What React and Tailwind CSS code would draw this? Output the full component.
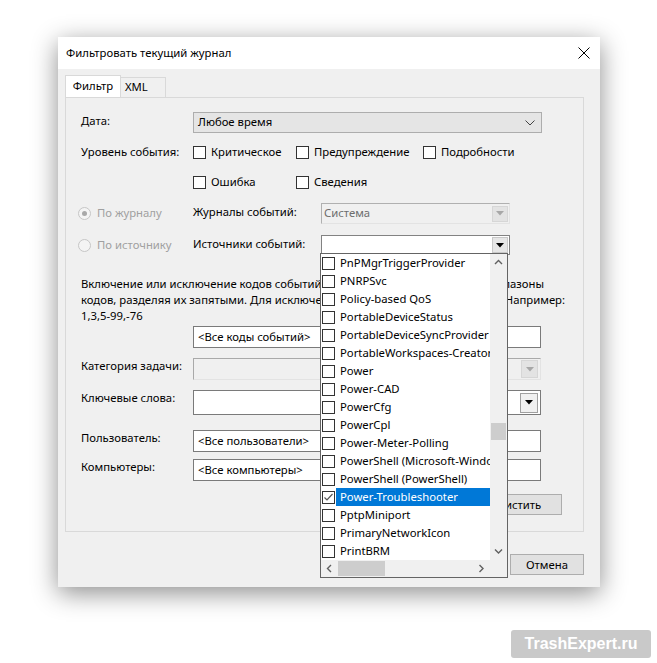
import React from "react";

const items = [
    "PnPMgrTriggerProvider",
    "PNRPSvc",
    "Policy-based QoS",
    "PortableDeviceStatus",
    "PortableDeviceSyncProvider",
    "PortableWorkspaces-Creator",
    "Power",
    "Power-CAD",
    "PowerCfg",
    "PowerCpl",
    "Power-Meter-Polling",
    "PowerShell (Microsoft-Windows-PowerShell)",
    "PowerShell (PowerShell)",
    "Power-Troubleshooter",
    "PptpMiniport",
    "PrimaryNetworkIcon",
    "PrintBRM",
];

function Box({ checked }) {
    return (
        <span className="w-[13px] h-[13px] border border-[#333] bg-white shrink-0 flex items-center justify-center">
            {checked && (
                <svg width="11" height="11" viewBox="0 0 11 11">
                    <polyline points="1.5,5.5 4,8 9.5,2" fill="none" stroke="#555" strokeWidth="1.2" />
                </svg>
            )}
        </span>
    );
}

function Check({ label, className = "" }) {
    return (
        <div className={`flex items-center gap-[5px] h-[20px] ${className}`}>
            <Box />
            <span>{label}</span>
        </div>
    );
}

function Radio({ label, on }) {
    return (
        <div className="flex items-center gap-[6px] w-[115px] -ml-[3px] text-[#a0a0a0] h-[16px]">
            <span className="w-[13px] h-[13px] rounded-full border border-[#c6c6c6] bg-[#f4f4f4] flex items-center justify-center">
                {on && <span className="w-[5px] h-[5px] rounded-full bg-[#a8a8a8]" />}
            </span>
            <span>{label}</span>
        </div>
    );
}

function Tri({ color = "#000" }) {
    return (
        <svg width="8" height="5" viewBox="0 0 8 5">
            <polygon points="0,0 8,0 4,4.5" fill={color} />
        </svg>
    );
}

function Chev({ dir, color = "#606060" }) {
    const pts = {
        up: "1,5 4.5,1.5 8,5",
        down: "1,1.5 4.5,5 8,1.5",
        left: "5,1 1.5,4.5 5,8",
        right: "1.5,1 5,4.5 1.5,8",
    }[dir];
    const vert = dir === "up" || dir === "down";
    return (
        <svg width={vert ? 9 : 7} height={vert ? 7 : 9} viewBox={vert ? "0 0 9 7" : "0 0 7 9"}>
            <polyline points={pts} fill="none" stroke={color} strokeWidth="1.4" />
        </svg>
    );
}

function Label({ children, className = "" }) {
    return <div className={`w-[112px] shrink-0 leading-4 ${className}`}>{children}</div>;
}

function Input({ value, className = "" }) {
    return (
        <div className={`w-[348px] h-[22px] border border-[#7a7a7a] bg-white flex items-center pl-[4px] ${className}`}>
            {value}
        </div>
    );
}

// строка абзаца: середина уходит под раскрытый список, поэтому хвост прижат вправо
function Line({ left, right, width }) {
    return (
        <div className={`flex whitespace-nowrap ${width}`}>
            <span className="flex-1 min-w-0 overflow-hidden">{left}</span>
            <span className="shrink-0">{right}</span>
        </div>
    );
}

export default function App() {
    return (
        <div className="w-[657px] h-[663px] bg-white relative overflow-hidden font-['Noto_Sans',sans-serif] text-[11.3px] text-black">
            <div className="pt-[37px] pl-[58px]">
                <div className="w-[542px] h-[550px] bg-[#f0f0f0] relative shadow-[0_6px_24px_rgba(0,0,0,0.45)] flex flex-col">
                    {/* заголовок */}
                    <div className="h-[32px] bg-white flex items-center justify-between pl-[8px] pr-[10px] shrink-0">
                        <span>Фильтровать текущий журнал</span>
                        <svg width="12" height="12" viewBox="0 0 12 12">
                            <path d="M0.5 0.5 L11.5 11.5 M11.5 0.5 L0.5 11.5" stroke="#000" strokeWidth="1" />
                        </svg>
                    </div>

                    {/* вкладки */}
                    <div className="pl-[7px] mt-[6px] flex items-end h-[22px]">
                        <div className="w-[56px] h-[22px] bg-white border border-[#d9d9d9] border-b-0 flex items-center justify-center">
                            Фильтр
                        </div>
                        <div className="w-[45px] h-[20px] bg-[#f0f0f0] border border-[#d9d9d9] border-l-0 border-b-0 flex items-center pl-[4px]">
                            XML
                        </div>
                    </div>

                    {/* панель фильтра */}
                    <div className="ml-[7px] w-[519px] border border-[#d9d9d9] bg-[#f0f0f0] pl-[15px] pt-[14px] pb-[16px]">
                        <div className="flex items-start">
                            <Label className="pt-[1px]">Дата:</Label>
                            <div className="w-[349px] h-[21px] border border-[#adadad] bg-[#e5e5e5] flex items-center justify-between pl-[4px] pr-[6px]">
                                <span>Любое время</span>
                                <svg width="10" height="6" viewBox="0 0 10 6">
                                    <polyline points="0.5,0.5 5,5 9.5,0.5" fill="none" stroke="#444" strokeWidth="1" />
                                </svg>
                            </div>
                        </div>

                        <div className="flex items-start mt-[9px]">
                            <Label className="pt-[2px]">Уровень события:</Label>
                            <div>
                                <div className="flex">
                                    <Check label="Критическое" className="w-[103px]" />
                                    <Check label="Предупреждение" className="w-[127px]" />
                                    <Check label="Подробности" />
                                </div>
                                <div className="flex mt-[10px]">
                                    <Check label="Ошибка" className="w-[103px]" />
                                    <Check label="Сведения" />
                                </div>
                            </div>
                        </div>

                        <div className="flex items-start mt-[11px]">
                            <div className="pt-[2px]">
                                <Radio label="По журналу" on />
                            </div>
                            <div className="w-[128px] leading-4 pt-[1px]">Журналы событий:</div>
                            <div className="w-[189px] h-[21px] border border-[#b0b0b0] border-r-[#e3e3e3] border-b-[#e3e3e3] bg-[#f0f0f0] flex items-center justify-between pl-[2px] pr-[1px] text-[#6d6d6d]">
                                <span>Система</span>
                                <span className="w-[16px] h-[16px] bg-[#e3e3e3] border border-[#d6d6d6] flex items-center justify-center">
                                    <Tri color="#a7a7a7" />
                                </span>
                            </div>
                        </div>

                        <div className="flex items-start mt-[11px]">
                            <div className="pt-[2px]">
                                <Radio label="По источнику" />
                            </div>
                            <div className="w-[128px] leading-4 pt-[1px]">Источники событий:</div>
                            <div className="w-[189px] h-[20px] border border-[#828282] bg-white flex items-center justify-end pr-[1px]">
                                <span className="w-[16px] h-[16px] bg-[#e6e6e6] border border-[#c8c8c8] flex items-center justify-center">
                                    <Tri />
                                </span>
                            </div>
                        </div>

                        <div className="mt-[21px] leading-4">
                            <Line
                                width="w-[463px]"
                                left="Включение или исключение кодов событий: введите номера кодов или их "
                                right="диапазоны"
                            />
                            <Line
                                width="w-[484px]"
                                left="кодов, разделяя их запятыми. Для исключения кода поставьте перед ним минус. "
                                right="Например:"
                            />
                            <div>1,3,5-99,-76</div>
                        </div>

                        <div className="flex items-start mt-[2px]">
                            <Label />
                            <Input value="<Все коды событий>" />
                        </div>

                        <div className="flex items-start mt-[10px]">
                            <Label>Категория задачи:</Label>
                            <div className="w-[348px] h-[22px] border border-[#a9a9a9] border-r-[#e3e3e3] border-b-[#e3e3e3] bg-[#f0f0f0] flex items-center justify-end pr-[2px]">
                                <span className="w-[17px] h-[18px] bg-[#e3e3e3] border border-[#d6d6d6] flex items-center justify-center">
                                    <Tri color="#a7a7a7" />
                                </span>
                            </div>
                        </div>

                        <div className="flex items-start mt-[10px]">
                            <Label>Ключевые слова:</Label>
                            <div className="w-[348px] h-[25px] border border-[#7a7a7a] bg-white flex items-center justify-end pr-[2px]">
                                <span className="w-[18px] h-[20px] bg-[#f0f0f0] border border-[#a0a0a0] flex items-center justify-center">
                                    <Tri />
                                </span>
                            </div>
                        </div>

                        <div className="flex items-start mt-[15px]">
                            <Label>Пользователь:</Label>
                            <Input value="<Все пользователи>" />
                        </div>

                        <div className="flex items-start mt-[7px]">
                            <Label>Компьютеры:</Label>
                            <Input value="<Все компьютеры>" />
                        </div>

                        <div className="flex justify-end mt-[13px] pr-[21px]">
                            <button className="w-[93px] h-[21px] border border-[#adadad] bg-[#e1e1e1] leading-4">
                                Очистить
                            </button>
                        </div>
                    </div>

                    {/* кнопки */}
                    <div className="flex justify-end gap-[6px] mt-[22px] pr-[16px]">
                        <button className="w-[74px] h-[21px] border border-[#adadad] bg-[#e1e1e1] leading-4">ОК</button>
                        <button className="w-[74px] h-[21px] border border-[#adadad] bg-[#e1e1e1] leading-4">Отмена</button>
                    </div>

                    {/* раскрытый список источников */}
                    <div className="absolute left-[262px] top-[216px] w-[188px] h-[325px] border border-[#646464] bg-white flex flex-col">
                        <div className="flex flex-1 min-h-0">
                            <div className="w-[169px] overflow-hidden">
                                {items.map((it) => {
                                    const sel = it === "Power-Troubleshooter";
                                    return (
                                        <div key={it} className="h-[18px] flex items-center pl-[1px] whitespace-nowrap">
                                            <Box checked={sel} />
                                            <span
                                                className={`ml-[1px] h-[18px] flex items-center pl-[4px] flex-1 ${sel ? "bg-[#0078d7] text-white" : ""}`}
                                            >
                                                {it}
                                            </span>
                                        </div>
                                    );
                                })}
                            </div>
                            <div className="w-[17px] bg-[#f0f0f0] flex flex-col items-center">
                                <div className="h-[17px] flex items-center justify-center">
                                    <Chev dir="up" />
                                </div>
                                <div className="flex-1 w-full pt-[152px]">
                                    <div className="w-[15px] mx-auto h-[17px] bg-[#cdcdcd]" />
                                </div>
                                <div className="h-[17px] flex items-center justify-center">
                                    <Chev dir="down" />
                                </div>
                            </div>
                        </div>
                        <div className="h-[17px] flex shrink-0">
                            <div className="w-[169px] bg-[#f0f0f0] flex items-center">
                                <div className="w-[17px] flex justify-center">
                                    <Chev dir="left" />
                                </div>
                                <div className="w-[47px] h-[15px] bg-[#cdcdcd]" />
                                <div className="flex-1" />
                                <div className="w-[17px] flex justify-center">
                                    <Chev dir="right" />
                                </div>
                            </div>
                            <div className="w-[17px] bg-[#f0f0f0]" />
                        </div>
                    </div>
                </div>
            </div>

            {/* водяной знак */}
            <div className="absolute left-[511px] top-[630px] w-[140px] h-[28px] rounded-[3px] bg-[#c9c9c9] flex items-center justify-center text-white font-bold text-[16px] font-['Liberation_Sans',sans-serif]">
                TrashExpert.ru
            </div>
        </div>
    );
}
